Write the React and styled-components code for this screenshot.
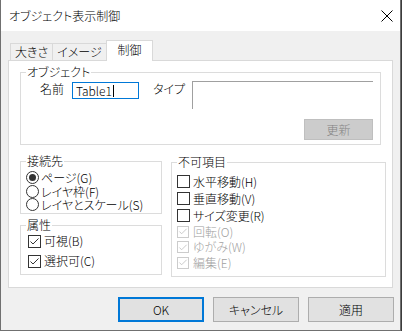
import React from "react";
import styled, { createGlobalStyle } from "styled-components";

const GlobalStyle = createGlobalStyle`
  html, body {
    margin: 0;
    padding: 0;
    background: #3c3c3c;
  }
  body {
    font-family: "Noto Sans CJK JP", "Meiryo UI", sans-serif;
    font-size: 12px;
    font-weight: 300;
    font-feature-settings: "palt";
    color: #000;
  }
`;

const Window = styled.div`
  width: 401px;
  height: 331px;
  box-sizing: border-box;
  border: 1px solid #707070;
  border-top: none;
  background: #f0f0f0;
  display: flex;
  flex-direction: column;
`;

const TitleBar = styled.div`
  height: 31px;
  flex: none;
  background: #fff;
  display: flex;
  align-items: center;
  justify-content: space-between;
  padding: 0 7px 0 8px;
`;

const Title = styled.span`
  line-height: 16px;
`;

const CloseIcon = styled.svg`
  width: 12px;
  height: 12px;
  display: block;
`;

const Client = styled.div`
  flex: 1;
  padding: 9px 7px 0 7px;
  display: flex;
  flex-direction: column;
`;

const TabStrip = styled.div`
  height: 20px;
  display: flex;
  align-items: flex-end;
  padding-left: 2px;
`;

const Tab = styled.div`
  box-sizing: border-box;
  width: ${(p) => p.$w}px;
  height: ${(p) => (p.$active ? 21 : 17)}px;
  margin-left: -1px;
  margin-bottom: ${(p) => (p.$active ? -1 : 0)}px;
  border: 1px solid #d9d9d9;
  border-bottom: none;
  background: ${(p) => (p.$active ? "#fff" : "#f0f0f0")};
  position: ${(p) => (p.$active ? "relative" : "static")};
  z-index: 1;
  display: flex;
  align-items: center;
  justify-content: center;
  padding-bottom: ${(p) => (p.$active ? 3 : 1)}px;
  line-height: 14px;
  &:first-child {
    margin-left: 0;
  }
`;

const Panel = styled.div`
  box-sizing: border-box;
  width: 385px;
  height: 228px;
  border: 1px solid #d9d9d9;
  background: #fff;
  padding: 11px 0 0 11px;
`;

const Group = styled.div`
  position: relative;
  box-sizing: border-box;
  width: ${(p) => p.$w}px;
  height: ${(p) => p.$h}px;
  margin-top: ${(p) => p.$mt || 0}px;
  border: 1px solid #dcdcdc;
  padding: ${(p) => p.$pad};
  display: flex;
  flex-direction: column;
`;

const Legend = styled.span`
  position: absolute;
  top: -8px;
  left: 5px;
  background: #fff;
  padding: 0 1px;
  line-height: 14px;
`;

const FieldRow = styled.div`
  display: flex;
  align-items: flex-start;
`;

const FieldLabel = styled.span`
  width: ${(p) => p.$w}px;
  margin: 1px ${(p) => p.$gap}px 0 0;
  line-height: 14px;
`;

const NameInput = styled.div`
  box-sizing: border-box;
  width: 67px;
  height: 17px;
  margin-top: 1px;
  margin-right: 14px;
  border: 1px solid #0078d7;
  padding-left: 3px;
  display: flex;
  align-items: center;
  line-height: 14px;
`;

const Caret = styled.span`
  width: 1px;
  height: 12px;
  background: #000;
  margin-left: 1px;
`;

const TypeBox = styled.div`
  box-sizing: border-box;
  width: 181px;
  height: 28px;
  border-top: 1px solid #a0a0a0;
  border-left: 1px solid #a0a0a0;
`;

const UpdateButton = styled.div`
  box-sizing: border-box;
  align-self: flex-end;
  width: 69px;
  height: 21px;
  margin-top: 10px;
  background: #cccccc;
  border: 1px solid #bfbfbf;
  color: #838383;
  display: flex;
  align-items: center;
  justify-content: center;
  line-height: 14px;
`;

const LowerRow = styled.div`
  display: flex;
  gap: 9px;
  margin-top: 16px;
`;

const Column = styled.div`
  display: flex;
  flex-direction: column;
  gap: 11px;
`;

const OptionRow = styled.div`
  display: flex;
  align-items: center;
  height: ${(p) => p.$h}px;
  gap: ${(p) => p.$gap}px;
  color: ${(p) => (p.$disabled ? "#a0a0a0" : "#000")};
  line-height: ${(p) => Math.min(14, Math.floor(p.$h))}px;
  white-space: nowrap;
`;

const RadioCircle = styled.span`
  box-sizing: border-box;
  width: 13px;
  height: 13px;
  border-radius: 50%;
  border: 1px solid #333;
  background: #fff;
  display: flex;
  align-items: center;
  justify-content: center;
  flex: none;
  &::after {
    content: "";
    width: 7px;
    height: 7px;
    border-radius: 50%;
    background: ${(p) => (p.$checked ? "#333" : "transparent")};
  }
`;

const CheckBox = styled.span`
  box-sizing: border-box;
  width: ${(p) => (p.$disabled ? 12 : 13)}px;
  height: ${(p) => (p.$disabled ? 12 : 13)}px;
  margin-right: ${(p) => (p.$disabled ? 1 : 0)}px;
  border: 1px solid ${(p) => (p.$disabled ? "#cccccc" : "#333")};
  background: #fff;
  display: flex;
  align-items: center;
  justify-content: center;
  flex: none;
`;

const ButtonRow = styled.div`
  display: flex;
  justify-content: flex-end;
  gap: 9px;
  margin-top: 9px;
  margin-right: -1px;
`;

const DialogButton = styled.div`
  box-sizing: border-box;
  width: 86px;
  height: 25px;
  background: #e1e1e1;
  border: ${(p) => (p.$default ? "2px solid #0078d7" : "1px solid #adadad")};
  display: flex;
  align-items: center;
  justify-content: center;
  line-height: 14px;
`;

const Check = ({ color }) => (
  <svg width="11" height="11" viewBox="0 0 11 11">
    <polyline points="1.5,5.5 4,8 9.5,2.5" fill="none" stroke={color} strokeWidth="1" />
  </svg>
);

const Radio = ({ checked, label }) => (
  <OptionRow $h={13.5} $gap={2}>
    <RadioCircle $checked={checked} />
    {label}
  </OptionRow>
);

const CheckItem = ({ checked, disabled, label, h = 20 }) => (
  <OptionRow $h={h} $gap={3} $disabled={disabled}>
    <CheckBox $disabled={disabled}>
      {checked && <Check color={disabled ? "#c4c4c4" : "#333"} />}
    </CheckBox>
    {label}
  </OptionRow>
);

const tabs = [
  { label: "大きさ", w: 43 },
  { label: "イメージ", w: 55 },
  { label: "制御", w: 47, active: true },
];

const locks = [
  { label: "水平移動(H)" },
  { label: "垂直移動(V)" },
  { label: "サイズ変更(R)" },
  { label: "回転(O)", disabled: true },
  { label: "ゆがみ(W)", disabled: true },
  { label: "編集(E)", disabled: true },
];

export default function App() {
  return (
    <>
      <GlobalStyle />
      <Window>
        <TitleBar>
          <Title>オブジェクト表示制御</Title>
          <CloseIcon viewBox="0 0 12 12">
            <path d="M0.5 0.5 L11.5 11.5 M11.5 0.5 L0.5 11.5" stroke="#000" strokeWidth="1" />
          </CloseIcon>
        </TitleBar>
        <Client>
          <TabStrip>
            {tabs.map((t) => (
              <Tab key={t.label} $w={t.w} $active={t.active}>
                {t.label}
              </Tab>
            ))}
          </TabStrip>
          <Panel>
            <Group $w={361} $h={73} $pad="8px 7px 0 19px">
              <Legend>オブジェクト</Legend>
              <FieldRow>
                <FieldLabel $w={24} $gap={8}>名前</FieldLabel>
                <NameInput>
                  Table1
                  <Caret />
                </NameInput>
                <FieldLabel $w={39} $gap={0}>タイプ</FieldLabel>
                <TypeBox />
              </FieldRow>
              <UpdateButton>更新</UpdateButton>
            </Group>
            <LowerRow>
              <Column>
                <Group $w={142} $h={53} $pad="9px 0 0 5px">
                  <Legend>接続先</Legend>
                  <Radio checked label="ページ(G)" />
                  <Radio label="レイヤ枠(F)" />
                  <Radio label="レイヤとスケール(S)" />
                </Group>
                <Group $w={142} $h={50} $pad="5px 0 0 7px">
                  <Legend>属性</Legend>
                  <CheckItem checked label="可視(B)" />
                  <CheckItem checked label="選択可(C)" />
                </Group>
              </Column>
              <Group $w={215} $h={115} $mt={1} $pad="10px 0 0 5px">
                <Legend>不可項目</Legend>
                {locks.map((l) => (
                  <CheckItem
                    key={l.label}
                    label={l.label}
                    disabled={l.disabled}
                    checked={l.disabled}
                    h={l.disabled ? 15.5 : 17}
                  />
                ))}
              </Group>
            </LowerRow>
          </Panel>
          <ButtonRow>
            <DialogButton $default>OK</DialogButton>
            <DialogButton>キャンセル</DialogButton>
            <DialogButton>適用</DialogButton>
          </ButtonRow>
        </Client>
      </Window>
    </>
  );
}
